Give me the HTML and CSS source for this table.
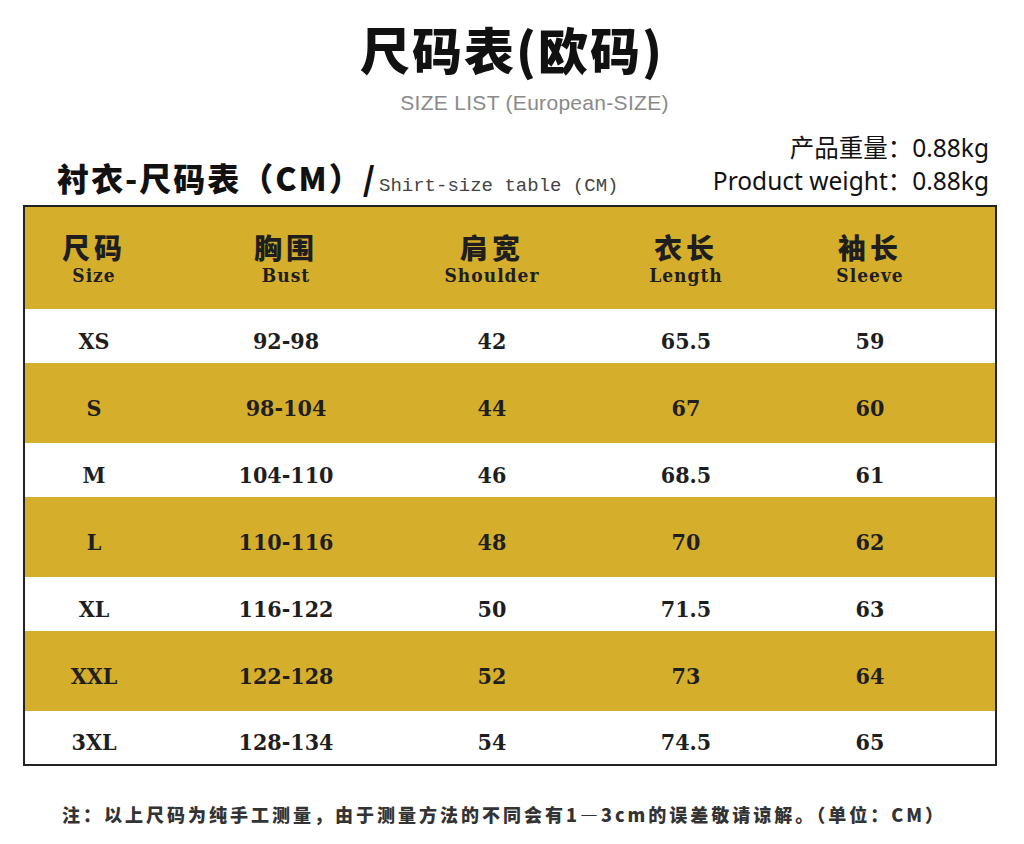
FILE: index.html
```html
<!DOCTYPE html>
<html lang="zh">
<head>
<meta charset="utf-8">
<title>尺码表(欧码)</title>
<link rel="stylesheet" href="styles.css">
</head>
<body>
<div class="page">
  <h1 class="title">尺码表(欧码)</h1>
  <p class="subtitle">SIZE LIST (European-SIZE)</p>
  <div class="meta">
    <div class="table-name"><span class="cn">衬衣-尺码表（CM）/</span><span class="en">Shirt-size table (CM)</span></div>
    <div class="weight">
      <div>产品重量：0.88kg</div>
      <div>Product weight：0.88kg</div>
    </div>
  </div>
  <div class="size-table">
    <div class="row head">
      <div class="cell"><span class="hcn">尺码</span><span class="hen">Size</span></div>
      <div class="cell"><span class="hcn">胸围</span><span class="hen">Bust</span></div>
      <div class="cell"><span class="hcn">肩宽</span><span class="hen">Shoulder</span></div>
      <div class="cell"><span class="hcn">衣长</span><span class="hen">Length</span></div>
      <div class="cell"><span class="hcn">袖长</span><span class="hen">Sleeve</span></div>
    </div>
    <div class="row light"><div class="cell">XS</div><div class="cell">92-98</div><div class="cell">42</div><div class="cell">65.5</div><div class="cell">59</div></div>
    <div class="row dark"><div class="cell">S</div><div class="cell">98-104</div><div class="cell">44</div><div class="cell">67</div><div class="cell">60</div></div>
    <div class="row light"><div class="cell">M</div><div class="cell">104-110</div><div class="cell">46</div><div class="cell">68.5</div><div class="cell">61</div></div>
    <div class="row dark"><div class="cell">L</div><div class="cell">110-116</div><div class="cell">48</div><div class="cell">70</div><div class="cell">62</div></div>
    <div class="row light"><div class="cell">XL</div><div class="cell">116-122</div><div class="cell">50</div><div class="cell">71.5</div><div class="cell">63</div></div>
    <div class="row dark"><div class="cell">XXL</div><div class="cell">122-128</div><div class="cell">52</div><div class="cell">73</div><div class="cell">64</div></div>
    <div class="row light last"><div class="cell">3XL</div><div class="cell">128-134</div><div class="cell">54</div><div class="cell">74.5</div><div class="cell">65</div></div>
  </div>
  <p class="note">注：以上尺码为纯手工测量，由于测量方法的不同会有1—3cm的误差敬请谅解。（单位：CM）</p>
</div>
</body>
</html>
```
FILE: styles.css
```css
html, body {
  margin: 0;
  padding: 0;
  background: #ffffff;
}
.page {
  width: 1024px;
  height: 844px;
  overflow: hidden;
  color: #1c1c1c;
  font-family: "Noto Sans CJK SC", "Noto Sans", sans-serif;
}
.title {
  margin: 18px 0 0;
  text-align: center;
  font-size: 50px;
  line-height: 60px;
  font-weight: 900;
  letter-spacing: 2px;
  color: #111;
}
.subtitle {
  margin: 13px 0 0;
  padding-left: 45px;
  text-align: center;
  font-family: "Liberation Sans", Arial, sans-serif;
  font-size: 21px;
  line-height: 24px;
  letter-spacing: 0.3px;
  color: #8a8a8a;
}
.meta {
  display: flex;
  justify-content: space-between;
  align-items: flex-end;
  padding: 16px 35px 0 57px;
  margin-bottom: 8px;
}
.table-name {
  display: flex;
  align-items: baseline;
  line-height: 34px;
  margin-bottom: -6px;
}
.table-name .cn {
  font-size: 32px;
  font-weight: 900;
  letter-spacing: 2px;
  color: #111;
}
.table-name .en {
  font-family: "Liberation Mono", monospace;
  font-size: 19px;
  color: #444;
  margin-left: 2px;
}
.weight {
  text-align: right;
  font-family: "Noto Sans", "Noto Sans CJK SC", sans-serif;
  font-size: 24.5px;
  line-height: 33px;
  color: #111;
}
.size-table {
  margin-left: 23px;
  width: 970px;
  border: 2px solid #222;
}
.row {
  display: grid;
  grid-template-columns: 138px 246px 166px 222px 146px;
  align-items: center;
  box-sizing: border-box;
  padding-top: 8px;
  font-family: "DejaVu Serif Condensed", "DejaVu Serif", serif;
  font-weight: 700;
  font-size: 23px;
  letter-spacing: 0;
  color: #1e1e1e;
}
.row .cell {
  text-align: center;
}
.row.head {
  height: 102px;
  padding-top: 26px;
  align-items: start;
  background: #d5ae2b;
}
.row.head .cell {
  display: flex;
  flex-direction: column;
  align-items: center;
}
.hcn {
  font-family: "Noto Sans CJK SC", sans-serif;
  font-weight: 900;
  font-size: 28px;
  line-height: 28px;
  letter-spacing: 4px;
  color: #1e1e1e;
}
.hen {
  margin-top: 4px;
  font-size: 19px;
  line-height: 20px;
  letter-spacing: 1px;
}
.row.light {
  height: 54px;
  background: #ffffff;
}
.row.dark {
  height: 80px;
  background: #d5ae2b;
}
.row.last {
  height: 53px;
}
.note {
  margin: 36px 0 0 62px;
  font-size: 18px;
  line-height: 24px;
  font-weight: 900;
  letter-spacing: 3px;
  color: #333;
}
```
